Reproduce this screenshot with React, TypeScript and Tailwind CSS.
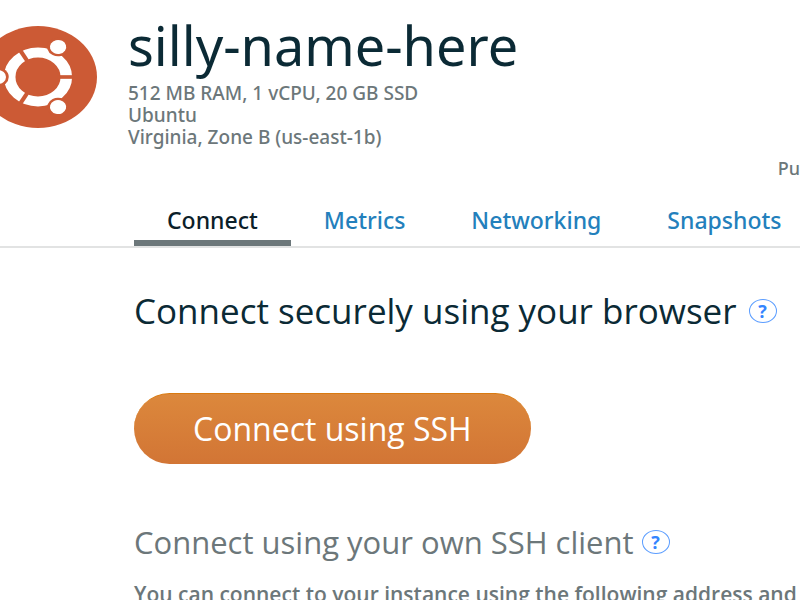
import React from "react";

const tabs = ["Connect", "Metrics", "Networking", "Snapshots"];

function UbuntuLogo() {
  return (
    <svg
      className="mt-[18px] -ml-[21px] h-[102px] w-[118px] shrink-0"
      viewBox="-50 -50 100 100"
      preserveAspectRatio="none"
      role="img"
      aria-label="Ubuntu"
    >
      <circle r="50" fill="#cc5a35" />
      <circle r="24" fill="none" stroke="#fff" strokeWidth="9.8" />
      {[0, 120, 240].map((angle) => (
        <g key={angle} transform={`rotate(${angle})`}>
          <path d="M18 0H30" stroke="#cc5a35" strokeWidth="3.6" />
          <circle cx="-34" r="9.2" fill="#cc5a35" />
          <circle cx="-34" r="6.9" fill="#fff" />
        </g>
      ))}
    </svg>
  );
}

function HelpButton({ label }: { label: string }) {
  return (
    <button
      type="button"
      aria-label={label}
      className="flex h-6 w-7 shrink-0 items-center justify-center rounded-[50%] border border-[#5b9dff] text-lg leading-none font-bold text-[#3385ff]"
    >
      ?
    </button>
  );
}

export default function App() {
  return (
    <div className="h-screen overflow-hidden bg-white font-['Open_Sans','Noto_Sans',sans-serif] whitespace-nowrap text-[#6c777a]">
      <header className="flex gap-[31px] pt-2">
        <UbuntuLogo />
        <div className="font-['Noto_Sans',sans-serif]">
          <h1 className="text-[54px] leading-[74px] font-normal text-[#0b2a35]">silly-name-here</h1>
          <div className="text-[19px] leading-[22px] font-medium">
            <p>512 MB RAM, 1 vCPU, 20 GB SSD</p>
            <p>Ubuntu</p>
            <p>Virginia, Zone B (us-east-1b)</p>
          </div>
        </div>
      </header>
      <p className="pt-[9px] text-right font-['Noto_Sans',sans-serif] text-lg leading-[22px] font-medium">Pu</p>

      <nav className="mt-[21px] flex border-b-2 border-[#e2e3e3] pl-[134px] font-['Noto_Sans',sans-serif]">
        {tabs.map((tab, i) => (
          <a
            key={tab}
            href={`#${tab.toLowerCase()}`}
            aria-current={i === 0 ? "page" : undefined}
            className={
              i === 0
                ? "border-b-6 border-[#6c777a] px-[33px] pt-1 pb-1 text-[23px] leading-8 font-medium text-[#0b2029]"
                : "border-b-6 border-transparent px-[33px] pt-1 pb-1 text-[23px] leading-8 font-medium text-[#2380bc]"
            }
          >
            {tab}
          </a>
        ))}
      </nav>

      <main className="pl-[134px]">
        <div className="flex items-center gap-3 pt-[43px]">
          <h2 className="text-[35px] leading-10 text-[#0b2a35]">Connect securely using your browser</h2>
          <HelpButton label="Help with the browser connection" />
        </div>
        <button
          type="button"
          className="mt-[62px] block h-[71px] rounded-full border-t border-[#d97a10] bg-linear-to-b from-[#dc883c] to-[#d27535] px-[59px] text-[32px] leading-10 text-white"
        >
          Connect using SSH
        </button>
        <div className="mt-[58px] flex items-center gap-2">
          <h2 className="text-[31px] leading-10">Connect using your own SSH client</h2>
          <HelpButton label="Help with an SSH client" />
        </div>
        <p className="mt-[18px] text-[21px] leading-7 font-semibold">
          You can connect to your instance using the following address and
        </p>
      </main>
    </div>
  );
}
